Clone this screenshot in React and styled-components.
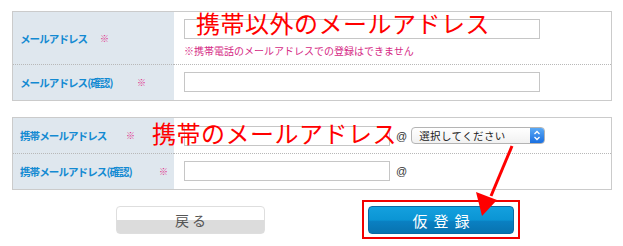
import React from 'react';
import styled, { createGlobalStyle } from 'styled-components';

const GlobalStyle = createGlobalStyle`
  body {
    margin: 0;
    background: #fff;
    font-family: "Noto Sans CJK JP", "Liberation Sans", sans-serif;
  }
`

const Page = styled.div`
  position: relative;
  width: 623px;
  height: 246px;
  padding: 11px 12px 0;
  box-sizing: border-box;
`

const FormTable = styled.div`
  display: grid;
  grid-template-columns: 161px 1fr;
  width: 600px;
  box-sizing: border-box;
  border: 1px solid #cbcbcb;
  margin-top: ${({ $gap }) => $gap || 0}px;
`

const LabelCell = styled.div`
  display: flex;
  align-items: center;
  height: ${({ $h }) => $h}px;
  padding-left: 7px;
  background: #dfe7ee;
  border-top: ${({ $first }) => ($first ? 'none' : '1px dotted #b8b8b8')};
  color: #138ad2;
  font-size: 10.5px;
  font-weight: 700;
  letter-spacing: -0.9px;
  white-space: nowrap;
`

const LabelText = styled.span`
  width: ${({ $w }) => $w}px;
`

const Mark = styled.span`
  color: #e0308a;
  font-size: 9px;
`

const ValueCell = styled.div`
  display: flex;
  flex-direction: ${({ $column }) => ($column ? 'column' : 'row')};
  align-items: ${({ $column }) => ($column ? 'flex-start' : 'center')};
  height: ${({ $h }) => $h}px;
  padding: ${({ $column }) => ($column ? '7px 0 0 10px' : '0 0 0 10px')};
  box-sizing: border-box;
  border-top: ${({ $first }) => ($first ? 'none' : '1px dotted #b8b8b8')};
`

const TextInput = styled.input`
  width: ${({ $w }) => $w}px;
  height: 20px;
  box-sizing: border-box;
  border: 1px solid #c6c6c6;
  padding: 0 4px;
  margin: 0;
  background: #fff;
`

const Note = styled.div`
  margin-top: 5px;
  color: #d52a85;
  font-size: 10px;
  line-height: 14px;
`

const At = styled.span`
  margin: 0 4px 0 6px;
  color: #333;
  font-family: "Liberation Sans", sans-serif;
  font-size: 11px;
`

const SelectBox = styled.div`
  display: flex;
  align-items: stretch;
  width: 134px;
  height: 17px;
  box-sizing: border-box;
  border: 1px solid #b4b4b4;
  border-radius: 4px;
  overflow: hidden;
  background: linear-gradient(#fff, #f1f1f1);
`

const SelectText = styled.span`
  flex: 1;
  padding-left: 7px;
  color: #222;
  font-size: 10.5px;
  line-height: 15px;
  letter-spacing: 0.4px;
`

const SelectCap = styled.span`
  display: flex;
  align-items: center;
  justify-content: center;
  width: 14px;
  background: linear-gradient(#5aa9f5, #1a6fe0);
`

const ButtonRow = styled.div`
  display: flex;
  align-items: center;
  gap: 97px;
  margin-top: 10px;
  padding-left: 104px;
`

const BackButton = styled.button`
  width: 149px;
  height: 28px;
  box-sizing: border-box;
  border: 1px solid #dedede;
  border-radius: 4px;
  background: linear-gradient(#fff 0%, #fff 50%, #dcdcdc 50%, #dcdcdc 100%);
  color: #555;
  font-family: inherit;
  font-size: 14px;
  letter-spacing: 3px;
  padding: 0 0 0 3px;
`

const Highlight = styled.div`
  border: 2px solid #f20000;
  padding: 4px 4px 3px;
`

const SubmitButton = styled.button`
  display: block;
  width: 146px;
  height: 28px;
  box-sizing: border-box;
  border: 1px solid #0a6aa3;
  border-radius: 4px;
  background: linear-gradient(#14a0de 0%, #0b95d4 50%, #0a80c2 55%, #0873b0 100%);
  color: #fff;
  font-family: inherit;
  font-size: 15px;
  letter-spacing: 6px;
  padding: 0 0 0 6px;
`

const Annotation = styled.div`
  position: absolute;
  left: ${({ $x }) => $x}px;
  top: ${({ $y }) => $y}px;
  color: #ff0000;
  font-size: 24px;
  line-height: 24px;
  letter-spacing: 0.5px;
  white-space: nowrap;
  pointer-events: none;
`

const ArrowLayer = styled.svg`
  position: absolute;
  left: 0;
  top: 0;
  pointer-events: none;
`

function App() {
  return (
    <Page>
      <GlobalStyle />
      <FormTable>
        <LabelCell $h={52} $first>
          <LabelText $w={80}>メールアドレス</LabelText><Mark>※</Mark>
        </LabelCell>
        <ValueCell $h={52} $first $column>
          <TextInput $w={356} />
          <Note>※携帯電話のメールアドレスでの登録はできません</Note>
        </ValueCell>
        <LabelCell $h={35}>
          <LabelText $w={117}>メールアドレス(確認)</LabelText><Mark>※</Mark>
        </LabelCell>
        <ValueCell $h={35}>
          <TextInput $w={356} />
        </ValueCell>
      </FormTable>

      <FormTable $gap={16}>
        <LabelCell $h={35} $first>
          <LabelText $w={106}>携帯メールアドレス</LabelText><Mark>※</Mark>
        </LabelCell>
        <ValueCell $h={35} $first>
          <TextInput $w={206} />
          <At>@</At>
          <SelectBox>
            <SelectText>選択してください</SelectText>
            <SelectCap>
              <svg width="8" height="11" viewBox="0 0 8 11">
                <path d="M1.5 4 L4 1.5 L6.5 4 M1.5 7 L4 9.5 L6.5 7" fill="none" stroke="#fff" strokeWidth="1.3" />
              </svg>
            </SelectCap>
          </SelectBox>
        </ValueCell>
        <LabelCell $h={35}>
          <LabelText $w={139}>携帯メールアドレス(確認)</LabelText><Mark>※</Mark>
        </LabelCell>
        <ValueCell $h={35}>
          <TextInput $w={206} />
          <At>@</At>
        </ValueCell>
      </FormTable>

      <ButtonRow>
        <BackButton>戻る</BackButton>
        <Highlight>
          <SubmitButton>仮登録</SubmitButton>
        </Highlight>
      </ButtonRow>

      <Annotation $x={196} $y={11}>携帯以外のメールアドレス</Annotation>
      <Annotation $x={152} $y={121}>携帯のメールアドレス</Annotation>
      <ArrowLayer width="623" height="246" viewBox="0 0 623 246">
        <line x1="512" y1="146" x2="491" y2="196" stroke="#f00" strokeWidth="3" />
        <polygon points="482,216 476,192 497,200" fill="#f00" />
      </ArrowLayer>
    </Page>
  )
}

export default App
